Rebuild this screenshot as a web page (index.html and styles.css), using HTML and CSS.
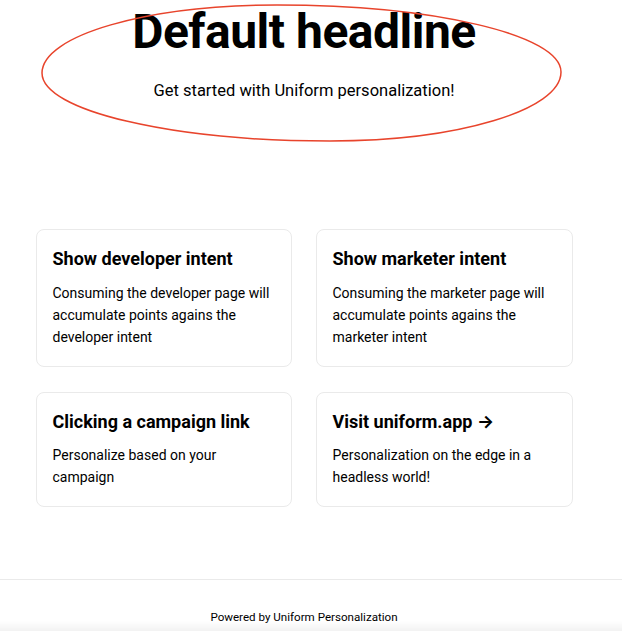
FILE: index.html
```html
<!DOCTYPE html>
<html lang="en">
<head>
    <meta charset="UTF-8">
    <meta name="viewport" content="width=device-width, initial-scale=1.0">
    <title>Uniform Personalization</title>
    <link rel="stylesheet" href="styles.css">
</head>
<body>
    <div class="container">
        <main class="main">
            <div class="hero">
                <h1 class="title">Default headline</h1>
                <p class="description">Get started with Uniform personalization!</p>

                <!-- hand-drawn highlight around the hero -->
                <svg class="scribble" width="622" height="150" viewBox="0 0 622 150" aria-hidden="true">
                    <path d="M42 73 C42 35.4 147.2 5 277 5 C433.9 5 561 35 561 72 C561 110.1 457.6 141 330 141 C170.9 141 42 110.6 42 73 Z"
                          fill="none" stroke="#e8442c" stroke-width="1.5"/>
                </svg>
            </div>

            <div class="grid">
                <a href="#" class="card">
                    <h2>Show developer intent</h2>
                    <p>Consuming the developer page will accumulate points agains the developer intent</p>
                </a>

                <a href="#" class="card">
                    <h2>Show marketer intent</h2>
                    <p>Consuming the marketer page will accumulate points agains the marketer intent</p>
                </a>

                <a href="#" class="card">
                    <h2>Clicking a campaign link</h2>
                    <p>Personalize based on your campaign</p>
                </a>

                <a href="#" class="card">
                    <h2>Visit uniform.app &rarr;</h2>
                    <p>Personalization on the edge in a headless world!</p>
                </a>
            </div>
        </main>
    </div>

    <footer class="footer">
        <span>Powered by Uniform Personalization</span>
    </footer>

    <div class="bottom-shade"></div>
</body>
</html>
```

FILE: styles.css
```css
* {
    margin: 0;
    padding: 0;
    box-sizing: border-box;
}

body {
    font-family: Roboto, Inter, 'Liberation Sans', sans-serif;
    color: #000;
    background: #fff;
}

a {
    color: inherit;
    text-decoration: none;
}

.container {
    padding: 0 14px 0 0;
}

.main {
    display: flex;
    flex-direction: column;
    align-items: center;
    padding-bottom: 72px;
}

.hero {
    position: relative;
    width: 100%;
    text-align: center;
    padding-top: 4px;
}

.title {
    font-size: 48px;
    font-weight: 700;
    line-height: 1.15;
    letter-spacing: -0.5px;
}

.description {
    font-size: 16.5px;
    line-height: 1.5;
    margin-top: 20px;
}

.scribble {
    position: absolute;
    top: 0;
    left: 0;
    pointer-events: none;
}

.grid {
    display: grid;
    grid-template-columns: 256px 257px;
    column-gap: 24px;
    row-gap: 25px;
    justify-content: center;
    margin-top: 125px;
}

.card {
    display: block;
    padding: 18px 16px;
    border: 1px solid #eaeaea;
    border-radius: 8px;
    text-align: left;
}

.card h2 {
    font-size: 18px;
    font-weight: 700;
    line-height: 1.2;
    margin-bottom: 12px;
}

.card p {
    font-size: 14px;
    line-height: 22px;
}

.footer {
    height: 75px;
    border-top: 1px solid #eaeaea;
    display: flex;
    justify-content: center;
    align-items: center;
    padding-right: 14px;
    font-size: 11.6px;
}

.bottom-shade {
    position: fixed;
    left: 0;
    right: 0;
    bottom: 0;
    height: 10px;
    background: linear-gradient(rgba(0, 0, 0, 0), rgba(0, 0, 0, 0.05));
    pointer-events: none;
}
```
